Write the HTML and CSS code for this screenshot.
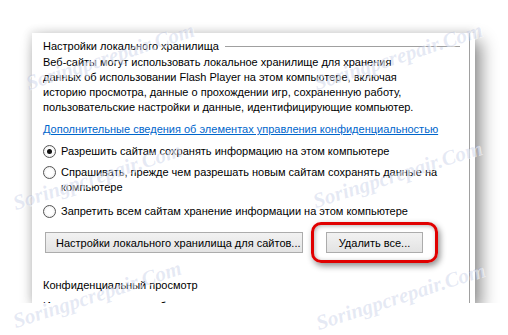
FILE: index.html
```html
<!DOCTYPE html>
<html lang="ru">
<head>
    <meta charset="UTF-8">
    <title>Настройки локального хранилища</title>
    <link rel="stylesheet" href="styles.css">
</head>
<body>
    <div class="panel">
        <div class="content">
            <div class="group-title">Настройки локального хранилища</div>
            <p class="desc">Веб-сайты могут использовать локальное хранилище для хранения<br>
                данных об использовании Flash Player на этом компьютере, включая<br>
                историю просмотра, данные о прохождении игр, сохраненную работу,<br>
                пользовательские настройки и данные, идентифицирующие компьютер.</p>
            <a class="more" href="#">Дополнительные сведения об элементах управления конфиденциальностью</a>

            <div class="options">
                <label class="option">
                    <span class="radio checked"></span>
                    <span>Разрешить сайтам сохранять информацию на этом компьютере</span>
                </label>
                <label class="option">
                    <span class="radio"></span>
                    <span>Спрашивать, прежде чем разрешать новым сайтам сохранять данные на<br>компьютере</span>
                </label>
                <label class="option last">
                    <span class="radio"></span>
                    <span>Запретить всем сайтам хранение информации на этом компьютере</span>
                </label>
            </div>

            <div class="buttons">
                <button class="btn wide">Настройки локального хранилища для сайтов...</button>
                <span class="highlight">
                    <button class="btn">Удалить все...</button>
                </span>
            </div>

            <div class="section">Конфиденциальный просмотр</div>
            <div class="section-next">Из-за использования обозревателя</div>
        </div>
        <div class="edge"></div>
    </div>

    <!-- watermark of the source site, drawn over the screenshot -->
    <div class="watermarks">
        <span class="wm wm-1">Soringpcrepair.Com</span>
        <span class="wm wm-2">Soringpcrepair.Com</span>
        <span class="wm wm-3">Soringpcrepair.Com</span>
        <span class="wm wm-4">Soringpcrepair.Com</span>
        <span class="wm wm-5">Soringpcrepair.Com</span>
        <span class="wm wm-6">Soringpcrepair.Com</span>
    </div>
</body>
</html>
```

FILE: styles.css
```css
body {
    margin: 0;
    background-color: #ffffff;
    font-family: "Liberation Sans", Arial, sans-serif;
    font-size: 11px;
    color: #000000;
}

.panel {
    display: flex;
    margin: 33px 0 0 32px;
    width: 443px;
    height: 270px;
    overflow: hidden;
    background: #ffffff;
    box-shadow: 6px 8px 16px rgba(0, 0, 0, 0.45), -2px -2px 8px rgba(0, 0, 0, 0.1);
}

.content {
    flex: 1;
    padding: 6px 9px 0 11px;
    border-right: 1px solid #a0a0a0;
    overflow: hidden;
}

.edge {
    width: 5px;
}

.group-title {
    display: flex;
    align-items: center;
    gap: 6px;
    line-height: 15px;
}

.group-title::after {
    content: "";
    flex: 1;
    border-top: 1px solid #a0a0a0;
}

.desc {
    margin: 1px 0 0;
    line-height: 15px;
    white-space: nowrap;
}

.more {
    display: block;
    margin-top: 7px;
    color: #0066cc;
    line-height: 15px;
    white-space: nowrap;
}

.options {
    margin-top: 7px;
}

.option {
    display: flex;
    gap: 5px;
    line-height: 15px;
    margin-bottom: 6px;
    white-space: nowrap;
}

.option.last {
    margin-top: 9px;
    margin-bottom: 0;
}

.radio {
    flex: none;
    width: 11px;
    height: 11px;
    margin-top: 1px;
    border: 1px solid #555555;
    border-radius: 50%;
    background: radial-gradient(circle, #ffffff 40%, #e2e2e2 100%);
    position: relative;
}

.radio.checked::after {
    content: "";
    position: absolute;
    left: 3px;
    top: 3px;
    width: 5px;
    height: 5px;
    border-radius: 50%;
    background: #111111;
}

.buttons {
    display: flex;
    align-items: center;
    gap: 8px;
    margin-top: 3px;
}

.btn {
    font-family: inherit;
    font-size: 11px;
    color: #000000;
    height: 21px;
    padding: 0 10px;
    border: 1px solid #acacac;
    background: linear-gradient(#f2f2f2, #e3e3e3);
    border-radius: 0;
    white-space: nowrap;
}

.btn.wide {
    width: 258px;
    margin-left: 2px;
}

.highlight {
    display: flex;
    padding: 7px 12px;
    border: 3px solid #e00000;
    border-radius: 10px;
    box-shadow: 2px 3px 6px rgba(0, 0, 0, 0.45), inset 1px 1px 4px rgba(0, 0, 0, 0.3);
}

.highlight .btn {
    width: 97px;
}

.section {
    margin-top: 15px;
    line-height: 15px;
}

.section-next {
    margin-top: 6px;
    line-height: 15px;
}

.watermarks {
    position: absolute;
    left: 0;
    top: 0;
    width: 508px;
    height: 335px;
    overflow: hidden;
    pointer-events: none;
}

.wm {
    position: absolute;
    font-family: "Liberation Serif", serif;
    font-style: italic;
    font-weight: bold;
    font-size: 21px;
    line-height: 22px;
    color: rgba(140, 155, 205, 0.22);
    text-shadow: 1px 1px 0 rgba(255, 255, 255, 0.6);
    transform: rotate(-18deg);
    transform-origin: 0 100%;
    white-space: nowrap;
}

.wm-1 { left: 30px; top: 72px; }
.wm-2 { left: 318px; top: 72px; }
.wm-3 { left: 17px; top: 192px; }
.wm-4 { left: 317px; top: 190px; }
.wm-5 { left: 17px; top: 310px; }
.wm-6 { left: 320px; top: 312px; }
```
